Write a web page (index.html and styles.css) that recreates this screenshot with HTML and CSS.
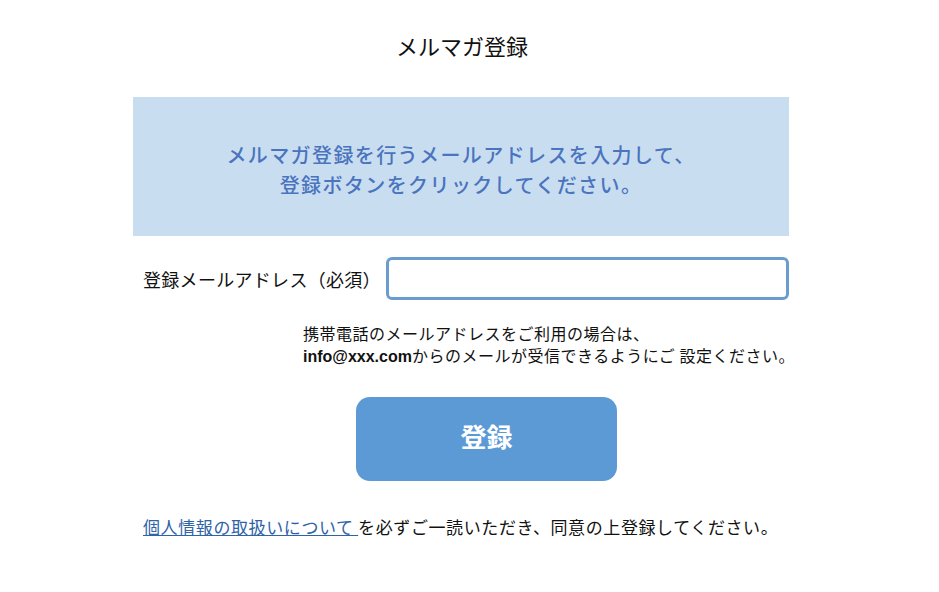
FILE: index.html
```html
<!DOCTYPE html>
<html>
<head>
<meta charset="utf-8">
<title>メルマガ登録</title>
<link rel="stylesheet" href="styles.css">
</head>
<body>

<div class="page">
 <h1 class="title">メルマガ登録</h1>

 <div class="lead">
  <p>メルマガ登録を行うメールアドレスを入力して、<br>登録ボタンをクリックしてください。</p>
 </div>

 <form class="form">
  <div class="row">
   <label class="label" for="mail">登録メールアドレス（必須）</label>
   <input class="field" id="mail" type="text">
  </div>

  <p class="note">携帯電話のメールアドレスをご利用の場合は、<br><b>info@xxx.com</b>からのメールが受信できるようにご 設定ください。</p>

  <div class="submit">
   <button class="btn" type="button">登録</button>
  </div>
 </form>

 <p class="privacy"><a href="#">個人情報の取扱いについて </a>を必ずご一読いただき、同意の上登録してください。</p>
</div>

</body>
</html>
```

FILE: styles.css
```css
html, body {
 margin: 0;
 padding: 0;
 background: #fff;
}
body {
 font-family: "Noto Sans CJK JP", "Noto Sans", sans-serif;
 color: #111;
}
.page {
 width: 656px;
 margin-left: 133px;
 padding-top: 30px;
}
.title {
 margin: 0;
 font-size: 22px;
 font-weight: normal;
 line-height: 30px;
 text-align: center;
 padding-left: 2px;
}
.lead {
 margin-top: 37px;
 height: 139px;
 background: #c9ddf1;
 display: flex;
 align-items: center;
 justify-content: center;
}
.lead p {
 margin: 0;
 padding-top: 6px;
 color: #4a74bd;
 font-size: 20px;
 font-weight: 500;
 line-height: 30px;
 text-align: center;
 letter-spacing: 1.4px;
}
.form {
 margin: 0;
}
.row {
 display: flex;
 align-items: center;
 margin-top: 21px;
}
.label {
 width: 253px;
 padding-left: 10px;
 box-sizing: border-box;
 font-size: 18px;
 letter-spacing: 0.3px;
 white-space: nowrap;
}
.field {
 width: 403px;
 height: 43px;
 box-sizing: border-box;
 border: 3px solid #6a9ccd;
 border-radius: 6px;
 outline: none;
 background: #fff;
}
.note {
 margin: 22px 0 0 170px;
 font-size: 16px;
 line-height: 22px;
 letter-spacing: 0.5px;
 white-space: nowrap;
}
.note b {
 font-family: "Liberation Sans", "Noto Sans", sans-serif;
 font-weight: bold;
 letter-spacing: 0;
}
.submit {
 margin-top: 29px;
 padding-left: 223px;
}
.btn {
 width: 261px;
 height: 84px;
 border: 0;
 border-radius: 14px;
 background: #5b9ad5;
 color: #fff;
 font-family: "Noto Sans CJK JP", sans-serif;
 font-size: 26px;
 font-weight: bold;
 padding: 0 0 8px;
}
.privacy {
 margin: 34px 0 0 10px;
 font-size: 17px;
 line-height: 24px;
 letter-spacing: 0.6px;
 white-space: nowrap;
}
.privacy a {
 color: #2f63a8;
 text-decoration: underline;
}
```
